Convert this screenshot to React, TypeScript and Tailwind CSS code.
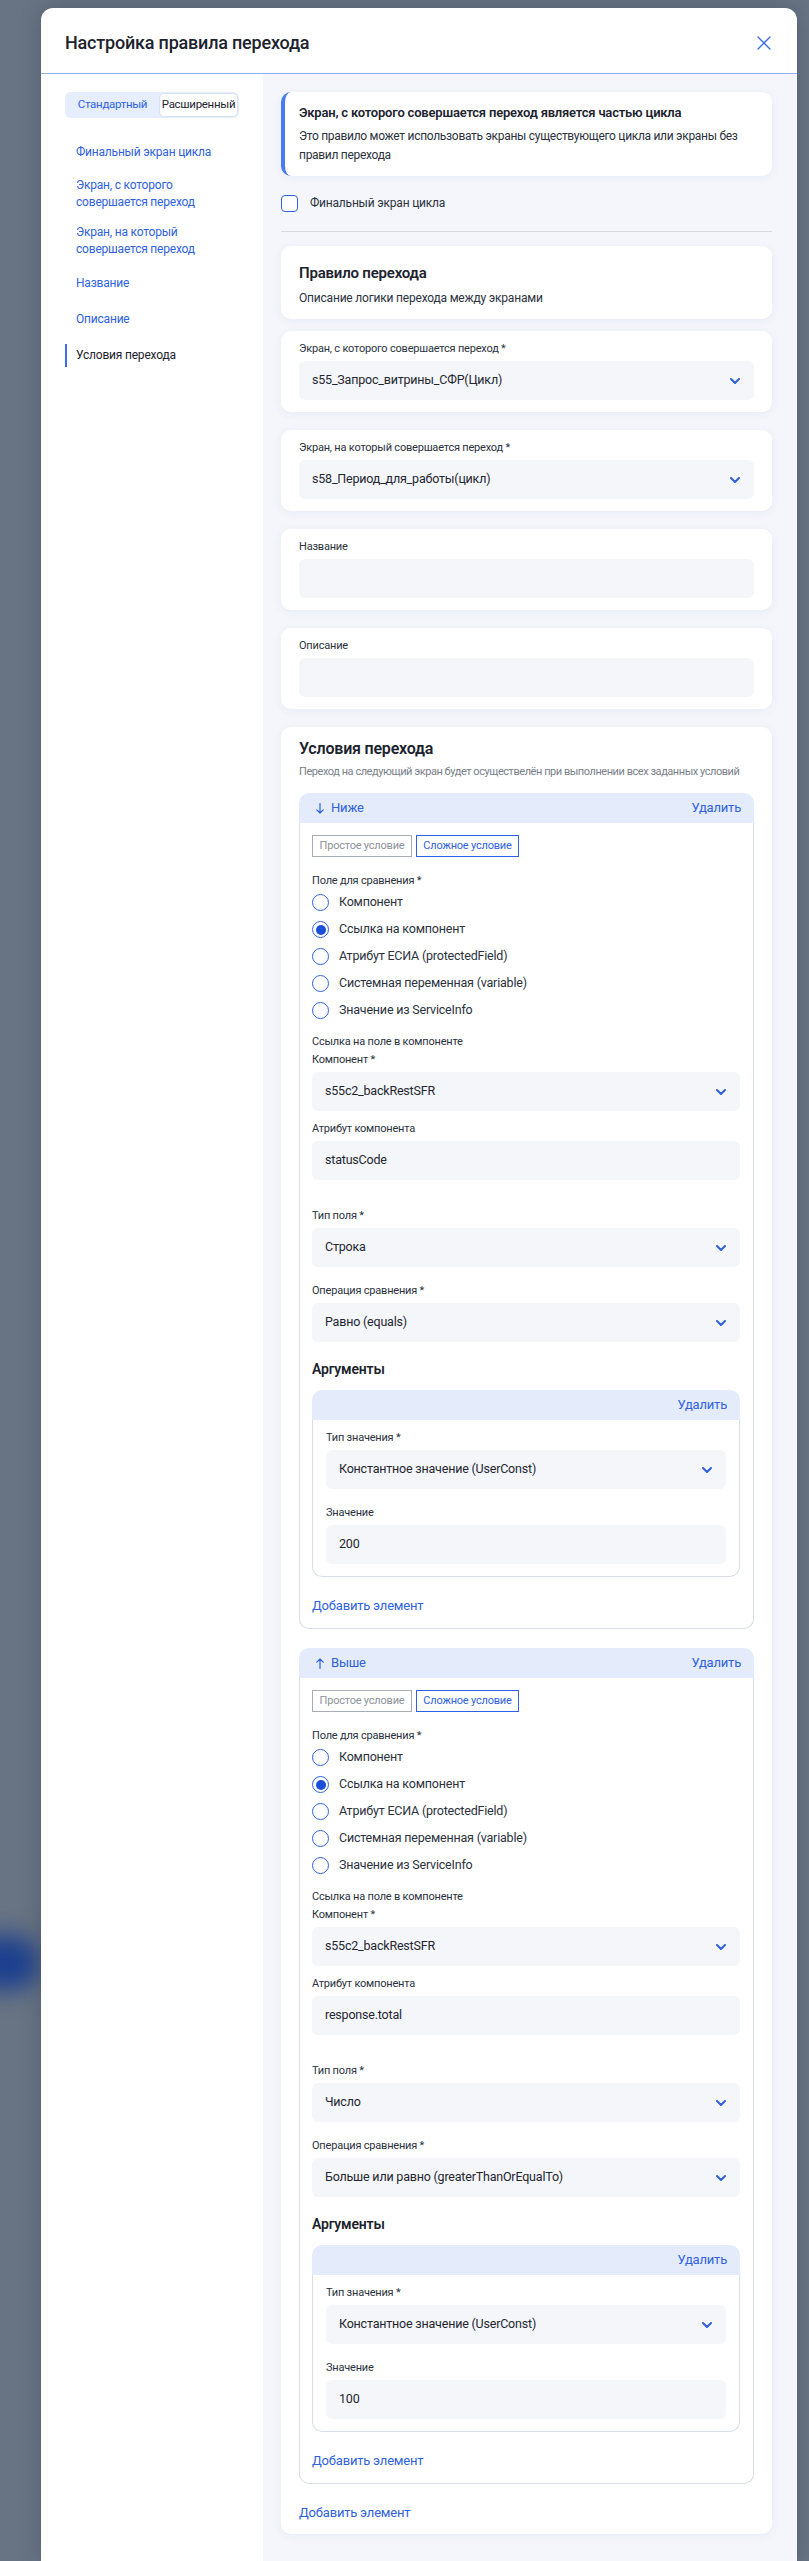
import React from "react";

const blue = "text-[#2f62e0]";

function Chevron() {
  return (
    <svg width="10" height="6" viewBox="0 0 10 6" fill="none" className="shrink-0">
      <path d="M1 1l4 4 4-4" stroke="#2f5fdc" strokeWidth="2" strokeLinecap="round" strokeLinejoin="round" />
    </svg>
  );
}

function Arrow({ up }: { up?: boolean }) {
  return (
    <svg width="8" height="11" viewBox="0 0 8 11" fill="none" className={up ? "rotate-180" : ""}>
      <path d="M4 0.5v9.5M0.8 6.8L4 10l3.2-3.2" stroke="#2f62e0" strokeWidth="1.2" strokeLinecap="round" strokeLinejoin="round" />
    </svg>
  );
}

function Label({ children }: { children: React.ReactNode }) {
  return <div className="text-[11px] leading-[18px] text-[#2b323d] mb-[3px]">{children}</div>;
}

function Select({ value }: { value: string }) {
  return (
    <div className="flex h-[39px] items-center justify-between rounded-md bg-[#f4f6fa] pl-[13px] pr-[14px]">
      <span className="text-[12.5px] text-[#1f2630]">{value}</span>
      <Chevron />
    </div>
  );
}

function Input({ value }: { value?: string }) {
  return (
    <div className="flex h-[39px] items-center rounded-md bg-[#f4f6fa] px-[13px]">
      <span className="text-[12.5px] text-[#1f2630]">{value}</span>
    </div>
  );
}

function Card({ children, className = "" }: { children: React.ReactNode; className?: string }) {
  return (
    <div className={`rounded-[10px] bg-white shadow-[0_2px_10px_rgba(40,60,110,0.06)] ${className}`}>{children}</div>
  );
}

function FieldCard({ label, children, className = "" }: { label: string; children: React.ReactNode; className?: string }) {
  return (
    <Card className={`px-[18px] pt-[9px] pb-3 ${className}`}>
      <Label>{label}</Label>
      {children}
    </Card>
  );
}

const radios = [
  "Компонент",
  "Ссылка на компонент",
  "Атрибут ЕСИА (protectedField)",
  "Системная переменная (variable)",
  "Значение из ServiceInfo",
];

function Condition({
  up,
  title,
  attr,
  type,
  op,
  value,
  className = "",
}: {
  up?: boolean;
  title: string;
  attr: string;
  type: string;
  op: string;
  value: string;
  className?: string;
}) {
  return (
    <div className={className}>
      <div className="flex h-[30px] items-center justify-between rounded-t-[10px] bg-[#e4ebfb] pl-[17px] pr-[13px]">
        <div className="flex items-center gap-[7px]">
          <Arrow up={up} />
          <span className={`text-[13px] ${blue}`}>{title}</span>
        </div>
        <span className={`text-[13px] ${blue}`}>Удалить</span>
      </div>
      <div className="rounded-b-[10px] border-x border-b border-[#d9dde4] pl-3 pr-[13px] pt-3 pb-3">
        <div className="flex gap-[4px]">
          <div className="flex h-[22px] w-[100px] items-center justify-center border border-[#a7adb6] text-[11px] text-[#8c929b]">
            Простое условие
          </div>
          <div className={`flex h-[22px] w-[103px] items-center justify-center border border-[#2f62e0] text-[11px] ${blue}`}>
            Сложное условие
          </div>
        </div>
        <div className="mt-[16px] text-[11px] leading-[16px] text-[#2b323d]">Поле для сравнения *</div>
        <div className="flex flex-col">
          {radios.map((r, i) => (
            <div key={r} className="flex h-[27px] items-center gap-[10px]">
              <div className="flex h-[17px] w-[17px] items-center justify-center rounded-full border-[1.5px] border-[#2f62e0]">
                {i === 1 && <div className="h-[10px] w-[10px] rounded-full bg-[#1a4fd8]" />}
              </div>
              <span className="text-[12.5px] text-[#2b323d]">{r}</span>
            </div>
          ))}
        </div>
        <div className="mt-[9px] text-[11px] leading-[18px] text-[#2b323d]">Ссылка на поле в компоненте</div>
        <Label>Компонент *</Label>
        <Select value="s55c2_backRestSFR" />
        <div className="mt-[9px]">
          <Label>Атрибут компонента</Label>
          <Input value={attr} />
        </div>
        <div className="mt-[27px]">
          <Label>Тип поля *</Label>
          <Select value={type} />
        </div>
        <div className="mt-[15px]">
          <Label>Операция сравнения *</Label>
          <Select value={op} />
        </div>
        <div className="mt-[17px] text-[14px] font-semibold leading-[20px] text-[#1c232d]">Аргументы</div>
        <div className="mt-[11px]">
          <div className="flex h-[30px] items-center justify-end rounded-t-[10px] bg-[#e4ebfb] pr-[13px]">
            <span className={`text-[13px] ${blue}`}>Удалить</span>
          </div>
          <div className="rounded-b-[10px] border-x border-b border-[#d9dde4] px-[13px] pt-[9px] pb-3">
            <Label>Тип значения *</Label>
            <Select value="Константное значение (UserConst)" />
            <div className="mt-[15px]">
              <Label>Значение</Label>
              <Input value={value} />
            </div>
          </div>
        </div>
        <div className={`mt-[19px] text-[13px] leading-[20px] ${blue}`}>Добавить элемент</div>
      </div>
    </div>
  );
}

const nav = [
  { t: ["Финальный экран цикла"], mt: "mt-[26px]" },
  { t: ["Экран, с которого", "совершается переход"], mt: "mt-[16px]" },
  { t: ["Экран, на который", "совершается переход"], mt: "mt-[13px]" },
  { t: ["Название"], mt: "mt-[17px]" },
  { t: ["Описание"], mt: "mt-[19px]" },
];

export default function App() {
  return (
    <div className="relative min-h-[2561px] overflow-hidden bg-[#687483] font-['Roboto',sans-serif] tracking-[-0.2px]">
      <div className="absolute left-[-30px] top-[1935px] h-[55px] w-[70px] rounded-full bg-[#1c3f8e] blur-md" />
      <div className="relative ml-[41px] mt-[8px] flex min-h-[2553px] w-[756px] flex-col rounded-t-[12px] bg-white shadow-[0_0_20px_rgba(20,30,50,0.25)]">
        <div className="flex h-[66px] items-center justify-between border-b border-[#8fb0ee] pl-6 pr-[26px] pt-[4px]">
          <h1 className="text-[18px] font-medium tracking-[-0.2px] text-[#1c232e]">Настройка правила перехода</h1>
          <svg width="14" height="14" viewBox="0 0 14 14" fill="none">
            <path d="M1 1l12 12M13 1L1 13" stroke="#3a6ee0" strokeWidth="1.4" strokeLinecap="round" />
          </svg>
        </div>
        <div className="flex flex-1">
          <aside className="w-[222px] shrink-0 bg-white px-6 pt-[18px]">
            <div className="flex h-[26px] items-stretch rounded-md bg-[#e6edfc] p-px">
              <div className={`flex w-[93px] items-center justify-center text-[11.5px] tracking-[-0.3px] ${blue}`}>Стандартный</div>
              <div className="flex flex-1 items-center justify-center rounded-[5px] border border-[#d8e1f4] bg-white text-[11.5px] tracking-[-0.3px] text-[#1f2630]">
                Расширенный
              </div>
            </div>
            {nav.map((n) => (
              <div key={n.t.join()} className={`${n.mt} pl-[11px] text-[12px] leading-[17px] ${blue}`}>
                {n.t.map((l) => (
                  <div key={l}>{l}</div>
                ))}
              </div>
            ))}
            <div className="mt-[16px] border-l-2 border-[#3b6ff0] py-[3px] pl-[9px] text-[12px] leading-[17px] text-[#1c232e]">
              Условия перехода
            </div>
          </aside>
          <main className="flex-1 bg-[#f4f6fb] pl-[18px] pr-[25px] pt-[18px]">
            <Card className="border-l-4 border-[#4a7bf0] pl-[14px] pr-3 pt-3 pb-[11px]">
              <div className="text-[13px] font-semibold leading-[18px] text-[#1c232e]">
                Экран, с которого совершается переход является частью цикла
              </div>
              <div className="mt-[5px] text-[12px] leading-[19px] tracking-[-0.3px] text-[#2b323d]">
                Это правило может использовать экраны существующего цикла или экраны без правил перехода
              </div>
            </Card>
            <div className="mt-[18px] flex items-center gap-3">
              <div className="h-[17px] w-[17px] rounded-[4px] border-[1.5px] border-[#2f62e0] bg-white" />
              <span className="text-[12px] text-[#2b323d]">Финальный экран цикла</span>
            </div>
            <div className="mt-[19px] h-px bg-[#d5d9e0]" />
            <Card className="mt-[14px] px-[18px] pt-4 pb-3">
              <div className="text-[15px] font-semibold leading-[22px] text-[#1c232e]">Правило перехода</div>
              <div className="mt-[5px] text-[12px] leading-[18px] text-[#2b323d]">Описание логики перехода между экранами</div>
            </Card>
            <FieldCard className="mt-3" label="Экран, с которого совершается переход *">
              <Select value="s55_Запрос_витрины_СФР(Цикл)" />
            </FieldCard>
            <FieldCard className="mt-[18px]" label="Экран, на который совершается переход *">
              <Select value="s58_Период_для_работы(цикл)" />
            </FieldCard>
            <FieldCard className="mt-[18px]" label="Название">
              <Input />
            </FieldCard>
            <FieldCard className="mt-[18px]" label="Описание">
              <Input />
            </FieldCard>
            <Card className="mt-[18px] px-[18px] pt-[10px] pb-[11px]">
              <div className="text-[16px] font-semibold leading-[24px] text-[#1c232e]">Условия перехода</div>
              <div className="mt-[2px] whitespace-nowrap text-[11px] leading-[18px] tracking-[-0.45px] text-[#7a808a]">
                Переход на следующий экран будет осуществелён при выполнении всех заданных условий
              </div>
              <Condition
                className="mt-3"
                title="Ниже"
                attr="statusCode"
                type="Строка"
                op="Равно (equals)"
                value="200"
              />
              <Condition
                className="mt-[19px]"
                up
                title="Выше"
                attr="response.total"
                type="Число"
                op="Больше или равно (greaterThanOrEqualTo)"
                value="100"
              />
              <div className={`mt-[19px] text-[13px] leading-[20px] ${blue}`}>Добавить элемент</div>
            </Card>
          </main>
        </div>
      </div>
    </div>
  );
}
